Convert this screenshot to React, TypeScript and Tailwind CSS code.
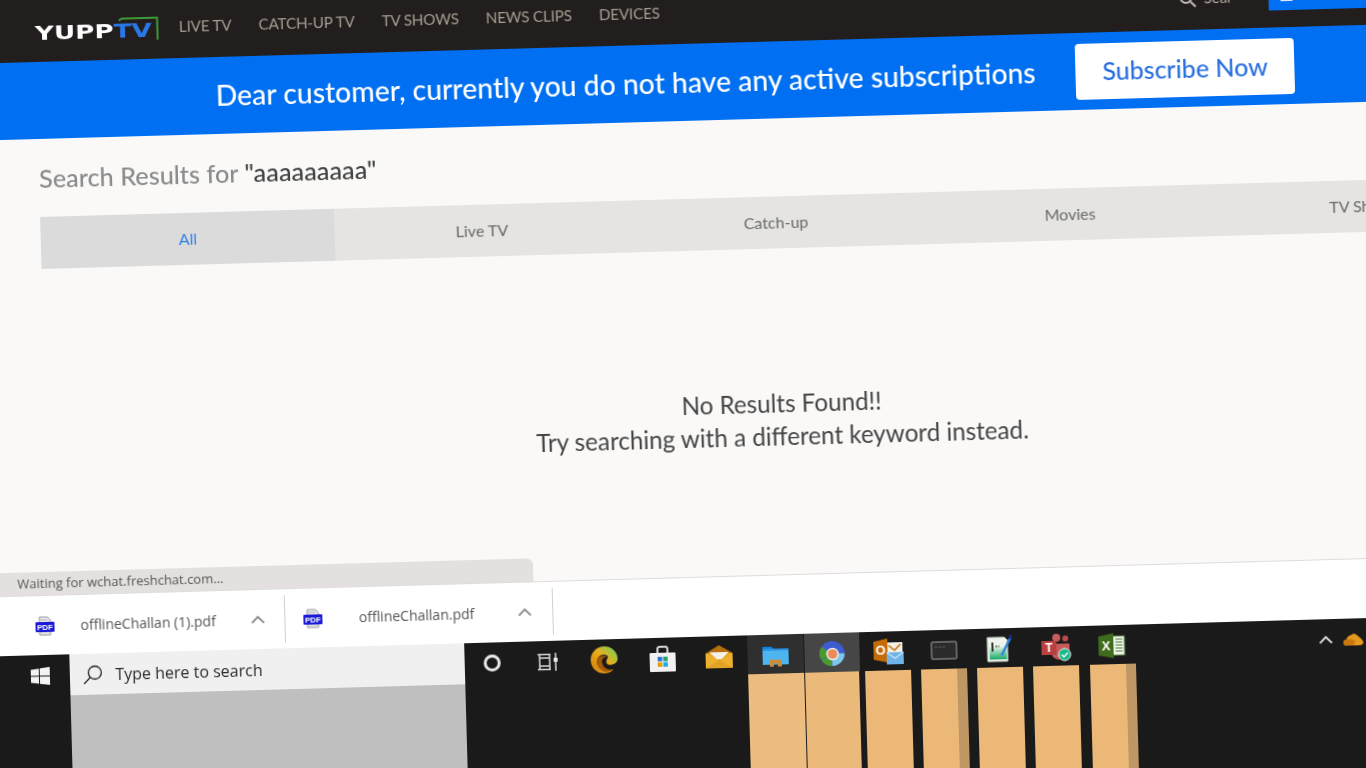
// Tela do YuppTV fotografada levemente inclinada: todo o conteúdo gira em um único wrapper.
const navItems = ["LIVE TV", "CATCH-UP TV", "TV SHOWS", "NEWS CLIPS", "DEVICES"];
const tabs = ["All", "Live TV", "Catch-up", "Movies", "TV Shows"];

function PdfIcon() {
  return (
    <svg width="19" height="20" viewBox="0 0 19 20" className="shrink-0">
      <path d="M4 1h8l3 3v15H4z" fill="#e8e8ea" stroke="#9a9aa0" strokeWidth="1" />
      <path d="M5 4h7M5 16h9" stroke="#b5b5ba" strokeWidth="1" />
      <rect x="0" y="6" width="19" height="10" rx="1" fill="#1a1ad6" />
      <text x="9.5" y="14" textAnchor="middle" fontSize="8" fontWeight="700" fill="#fff" fontFamily="Liberation Sans, sans-serif">PDF</text>
    </svg>
  );
}

function Chevron({ color, size }: { color: string; size: number }) {
  return (
    <svg width={size} height={size * 0.6} viewBox="0 0 20 12" fill="none" stroke={color} strokeWidth="2.6">
      <path d="M2 10.5 10 2.5l8 8" />
    </svg>
  );
}

function Edge() {
  return (
    <svg width="29" height="29" viewBox="0 0 28 28">
      <defs>
        <linearGradient id="edge" x1="0" y1="1" x2="1" y2="0">
          <stop offset="0.1" stopColor="#d98410" />
          <stop offset="0.55" stopColor="#e9ae1c" />
          <stop offset="0.95" stopColor="#6fd45a" />
        </linearGradient>
      </defs>
      <path d="M14 1C22 1 27 7 27 13C27 17 23 19 20 19C17 19 16 18 16 16C16 13 19 12 17 10C12 7 7 11 7 16C7 21 12 25 17 25C20 25 22 24 23 23C21 26 18 27 14 27C6 27 1 21 1 14C1 7 7 1 14 1Z" fill="url(#edge)" />
      <path d="M7 16C7 11 12 9 17 11C13 11 11 14 12 17C13 22 18 25 23 23C20 26 16 26 13 25C9 23 7 20 7 16Z" fill="#a85c08" />
    </svg>
  );
}

function Store() {
  return (
    <svg width="28" height="28" viewBox="0 0 28 28">
      <path d="M9 9V4.5Q9 2 11 2h6q2 0 2 2.500V9" fill="none" stroke="#d8d8d8" strokeWidth="2" />
      <rect x="1" y="8" width="26" height="19" rx="1" fill="#f1f1f1" />
      <rect x="9" y="12" width="4.500" height="4.500" fill="#2d6fd8" />
      <rect x="14.500" y="12" width="4.500" height="4.500" fill="#1fa56b" />
      <rect x="9" y="17.500" width="4.500" height="4.500" fill="#e89d00" />
      <rect x="14.500" y="17.500" width="4.500" height="4.500" fill="#12aef0" />
    </svg>
  );
}

function Mail() {
  return (
    <svg width="29" height="25" viewBox="0 0 29 25">
      <path d="M1 9 14.500 1 28 9v2H1z" fill="#b8700f" />
      <rect x="1" y="9" width="27" height="15" fill="#e6a928" />
      <path d="M5 8h19l-7 7h-5z" fill="#f4f1ea" />
      <path d="M1 9 14.500 17 28 9v15H1z" fill="#eeb12f" />
      <path d="M14.500 16 28 24H1z" fill="#d9981f" opacity="0.6" />
    </svg>
  );
}

function Folder() {
  return (
    <svg width="26" height="24" viewBox="0 0 26 24">
      <path d="M0 3h9l2 2H0z" fill="#0d82dc" />
      <rect x="0" y="5" width="26" height="16" fill="#4db5ef" />
      <rect x="0" y="5" width="26" height="2" fill="#2a93e2" />
      <path d="M7 16h12v7h-4v-3h-4v3H7z" fill="#c88d3d" />
    </svg>
  );
}

function Chrome() {
  return (
    <svg width="27" height="27" viewBox="0 0 28 28">
      <circle cx="14" cy="14" r="13" fill="#3c5cd0" />
      <path d="M14 14 2.800 20.500A13 13 0 0 1 3 7z" fill="#4a9a30" />
      <path d="M14 14 3 21a13 13 0 0 0 11 6z" fill="#4a9a30" />
      <path d="M14 14h13a13 13 0 0 1-13 13z" fill="#7ec8ea" />
      <circle cx="14.500" cy="14.500" r="6.500" fill="#e8f0f4" />
      <circle cx="14.500" cy="14.500" r="5" fill="#ee8a58" />
    </svg>
  );
}

function Outlook() {
  return (
    <svg width="31" height="27" viewBox="0 0 31 27" className="translate-x-px">
      <rect x="13" y="4" width="16" height="14" fill="#f3efe6" />
      <path d="M15 7l6 5 6-6" fill="none" stroke="#c4700c" strokeWidth="1.600" />
      <path d="M0 3 14 0v24L0 21z" fill="#c56b05" />
      <text x="7" y="16" textAnchor="middle" fontSize="13" fontWeight="700" fill="#fff" fontFamily="Liberation Sans, sans-serif">O</text>
      <rect x="13" y="14" width="17" height="12" fill="#6fb4e8" />
      <path d="M13 14l8.500 6 8.500-6" fill="none" stroke="#cfe6f8" strokeWidth="1.200" />
    </svg>
  );
}

function Cmd() {
  return (
    <svg width="27" height="19" viewBox="0 0 27 19">
      <rect x="1" y="1" width="25" height="17" rx="1.500" fill="#2b2b2b" stroke="#7a7a7a" strokeWidth="1.500" />
      <path d="M4 6h3M8 6h3M12 6h3" stroke="#5a5a5a" strokeWidth="1.200" />
    </svg>
  );
}

function Notepad() {
  return (
    <svg width="26" height="27" viewBox="0 0 26 27">
      <defs>
        <linearGradient id="note" x1="0" y1="0" x2="0" y2="1">
          <stop offset="0" stopColor="#e8f4e6" />
          <stop offset="1" stopColor="#17a968" />
        </linearGradient>
      </defs>
      <path d="M1 2h17l3 3v21H1z" fill="#eef3ec" stroke="#c9cfc6" strokeWidth="1" />
      <rect x="3" y="11" width="17" height="13" fill="url(#note)" />
      <path d="M6 7v9" stroke="#333" strokeWidth="2" />
      <path d="M9 11h4" stroke="#555" strokeWidth="1.500" strokeDasharray="2 1" />
      <path d="M15 20 24 3" stroke="#2d86d8" strokeWidth="2.600" />
      <path d="M23 4 25 0" stroke="#1c2f9c" strokeWidth="2" />
    </svg>
  );
}

function Teams() {
  return (
    <svg width="30" height="29" viewBox="0 0 30 29">
      <circle cx="15" cy="5" r="4" fill="#c85d5d" />
      <circle cx="24" cy="6" r="3" fill="#b94d4d" />
      <path d="M10 11h18v8q0 8-9 8t-9-8z" fill="#c65a5a" />
      <rect x="0" y="8" width="15" height="14" fill="#b9403f" />
      <text x="7.500" y="19" textAnchor="middle" fontSize="12" fontWeight="700" fill="#fff" fontFamily="Liberation Sans, sans-serif">T</text>
      <circle cx="23" cy="22" r="6" fill="#18b888" stroke="#e7f3ec" strokeWidth="1" />
      <path d="M20 22l2.200 2.200 4-4" fill="none" stroke="#fff" strokeWidth="1.500" />
    </svg>
  );
}

function Excel() {
  return (
    <svg width="27" height="25" viewBox="0 0 27 25">
      <rect x="13" y="3" width="13" height="19" fill="#eef4ea" stroke="#5e8c46" strokeWidth="1" />
      <path d="M17 6h7M17 9h7M17 12h7M17 15h7M17 18h7" stroke="#4c7a3a" strokeWidth="1.200" />
      <path d="M0 3 15 0v25L0 22z" fill="#3f6b1d" />
      <text x="7.500" y="17" textAnchor="middle" fontSize="13" fontWeight="700" fill="#fff" fontFamily="Liberation Sans, sans-serif">X</text>
    </svg>
  );
}

function OneDrive() {
  return (
    <svg width="20" height="13" viewBox="0 0 20 13">
      <path d="M3 13Q0 13 0 10T3 7Q4 3 8 2.500 11 0 14 3 18 6 20 9.500 20 13 16 13z" fill="#e59a1d" />
      <path d="M4 7Q8 5 12 9l-2 4H3Q0 13 0 10t4-3z" fill="#c9790c" />
    </svg>
  );
}

// Ícones da barra de tarefas com a coluna clara (tapa-dados) logo abaixo.
const apps = [
  { icon: <Folder />, cell: "w-[55.500px] bg-[#2f2f2f]", box: "ml-0 w-[55.500px] bg-[#edbd80]", stripe: false },
  { icon: <Chrome />, cell: "ml-[0.500px] w-[55.500px] bg-[#464646]", box: "ml-[0.500px] w-[54px] bg-[#ebb97a]", stripe: false },
  { icon: <Outlook />, cell: "", box: "ml-[5px] w-[46px] bg-[#ebb877]", stripe: false },
  { icon: <Cmd />, cell: "", box: "ml-[5px] w-[46px] bg-[#ebb877]", stripe: true },
  { icon: <Notepad />, cell: "", box: "ml-[5px] w-[46px] bg-[#ebb877]", stripe: false },
  { icon: <Teams />, cell: "", box: "ml-[5px] w-[46px] bg-[#ebb877]", stripe: false },
  { icon: <Excel />, cell: "", box: "ml-[5px] w-[46px] bg-[#ebb877]", stripe: true },
];

export default function App() {
  return (
    <div className="h-screen w-screen overflow-hidden bg-[#1a1a1a]">
      <div className="-ml-10 w-[1660px] origin-[40px_0px] rotate-[-1.6deg] bg-[#faf9f8] font-['Lato',sans-serif] blur-[0.35px]">
        <header className="flex h-[63px] items-center bg-[#221e1d] pl-10">
          <div className="relative ml-[34px] h-[30px] w-[123px] shrink-0">
            <span className="absolute left-0 top-[6px] origin-left scale-x-[1.38] font-['DejaVu_Sans',sans-serif] text-[19px] leading-[22px] font-bold whitespace-nowrap text-white">
              YUPP<span className="text-[#2a78e8]">TV</span>
            </span>
            <svg className="absolute left-[84px] top-[4px]" width="40" height="24" viewBox="0 0 40 24" fill="none">
              <path d="M0 3 3 1h35.500v22" stroke="#3f9a35" strokeWidth="2" />
            </svg>
          </div>
          <nav className="ml-[21px] flex gap-[27px] text-[15.200px] tracking-[-0.15px] text-[#a79e92]">
            {navItems.map((item) => (
              <a key={item} className="whitespace-nowrap">{item}</a>
            ))}
          </nav>
          <svg className="ml-[519px] shrink-0" width="18" height="18" viewBox="0 0 18 18" fill="none" stroke="#c4c0bb" strokeWidth="2">
            <circle cx="7.500" cy="7.500" r="5.500" />
            <path d="m12 12 5 5" />
          </svg>
          <span className="ml-[7px] w-[65px] text-[15px] text-[#b5aea5]">Sear</span>
          <div className="flex h-[29px] w-[300px] items-center bg-[#006ff2] pl-[12px]">
            <span className="h-[10px] w-[12px] bg-[#dfe9f7]" />
          </div>
        </header>

        <section className="flex h-[77px] items-center bg-[#006ff2] pl-10">
          <p className="ml-[213px] text-[28.350px] font-medium whitespace-nowrap text-white">
            Dear customer, currently you do not have any active subscriptions
          </p>
          <button className="ml-[40px] h-[56px] w-[219px] rounded bg-white text-[25px] font-medium text-[#2a6fe0]">
            Subscribe Now
          </button>
        </section>

        <main className="flex h-[456px] flex-col pl-10">
          <h1 className="ml-[34px] mt-[25px] text-[25.300px] leading-[28px] font-medium text-[#8b8b8b]">
            Search Results for <span className="text-[#444]">"aaaaaaaaa"</span>
          </h1>
          <div className="ml-[34px] mt-[25px] flex h-[52px] w-[1471px] shrink-0 bg-[#e5e4e3]">
            {tabs.map((tab, i) => (
              <div
                key={tab}
                className={
                  i === 0
                    ? "flex w-[294.200px] items-center justify-center bg-[#dcdbdc] text-[16px] text-[#2f7fe8]"
                    : "flex w-[294.200px] items-center justify-center text-[16px] text-[#6a6a6a]"
                }
              >
                {tab}
              </div>
            ))}
          </div>
          <div className="mt-[138px] w-[1540px] text-center text-[24.200px] leading-[33px] text-[#444]">
            <p>No Results Found!!</p>
            <p>Try searching with a different keyword instead.</p>
          </div>
          <div className="-ml-10 mt-auto flex h-[23px] w-[557px] items-center rounded-tr-md bg-[#e4e0df] pl-[41px] font-['Open_Sans',sans-serif] text-[13px] text-[#555]">
            Waiting for wchat.freshchat.com...
          </div>
        </main>

        <div className="flex h-[60px] items-center border-t border-[#dedcdc] bg-white pl-10 font-['Open_Sans',sans-serif] text-[14px] text-[#555]">
          <div className="flex w-[266.500px] items-center pl-[18px]">
            <PdfIcon />
            <span className="ml-[26px] whitespace-nowrap">offlineChallan (1).pdf</span>
            <span className="ml-auto mr-[19px] flex"><Chevron color="#8a8a8a" size={15} /></span>
          </div>
          <div className="h-[47px] w-px bg-[#cfcfcf]" />
          <div className="flex w-[267px] items-center pl-[18px]">
            <PdfIcon />
            <span className="ml-[37px] whitespace-nowrap">offlineChallan.pdf</span>
            <span className="ml-auto mr-[20px] flex"><Chevron color="#8a8a8a" size={15} /></span>
          </div>
          <div className="h-[47px] w-px bg-[#cfcfcf]" />
        </div>

        <div className="flex h-[224px] items-start bg-[#1a1a1a] pl-10 font-['Open_Sans',sans-serif]">
          <div className="flex h-[41px] w-[50.500px] shrink-0 items-center justify-center pr-[8px]">
            <svg width="19" height="18" viewBox="0 0 19 18" fill="#f4f4f4">
              <path d="M0 2.500 8 1.400V8.500H0zM9 1.200 19 0V8.500H9zM0 9.500h8v7.100L0 15.500zM9 9.500h10V18L9 16.800z" />
            </svg>
          </div>
          <div className="flex h-full w-[395px] shrink-0 flex-col bg-[#bfbfbf]">
            <div className="flex h-[41px] items-center bg-[#f0f0f0] pl-[13px] text-[16px] text-[#2b2b2b]">
              <svg width="20" height="20" viewBox="0 0 20 20" fill="none" stroke="#222" strokeWidth="1.300">
                <circle cx="12" cy="8" r="6.500" />
                <path d="M7.500 12.500 1 19" />
              </svg>
              <span className="ml-[13px]">Type here to search</span>
            </div>
          </div>
          <div className="flex h-[41px] w-[56px] shrink-0 items-center justify-center">
            <span className="h-[17px] w-[17px] rounded-full border-[3px] border-[#e8e8e8]" />
          </div>
          <div className="flex h-[41px] w-[54px] shrink-0 items-center justify-center">
            <svg width="20" height="18" viewBox="0 0 20 18" fill="none" stroke="#d8d8d8" strokeWidth="1.500">
              <path d="M0 1.500h13M2 5h10v8H2zM0 16.500h13M2 1.500V5M12 1.500V5M2 13v3.500M12 13v3.500M18 0v5M18 9v9" />
              <rect x="16" y="5" width="4" height="4" fill="#e8e8e8" stroke="none" />
            </svg>
          </div>
          <div className="flex h-[41px] w-[60px] shrink-0 items-center justify-center"><Edge /></div>
          <div className="flex h-[41px] w-[56px] shrink-0 items-center justify-center"><Store /></div>
          <div className="flex h-[41px] w-[57.500px] shrink-0 items-center justify-center"><Mail /></div>
          {apps.map((app, i) => (
            <div key={i} className="flex h-full w-[56.100px] shrink-0 flex-col">
              <div className={`flex h-[39px] items-center justify-center pt-[2px] ${app.cell}`}>{app.icon}</div>
              <div className={`flex-1 ${app.box} flex justify-end`}>
                {app.stripe && <span className="w-[10px] bg-[#bf9765]" />}
              </div>
            </div>
          ))}
          <div className="ml-[178px] flex h-[41px] shrink-0 items-center gap-[10px]">
            <Chevron color="#e4e4e4" size={15} />
            <OneDrive />
          </div>
        </div>
      </div>
    </div>
  );
}
